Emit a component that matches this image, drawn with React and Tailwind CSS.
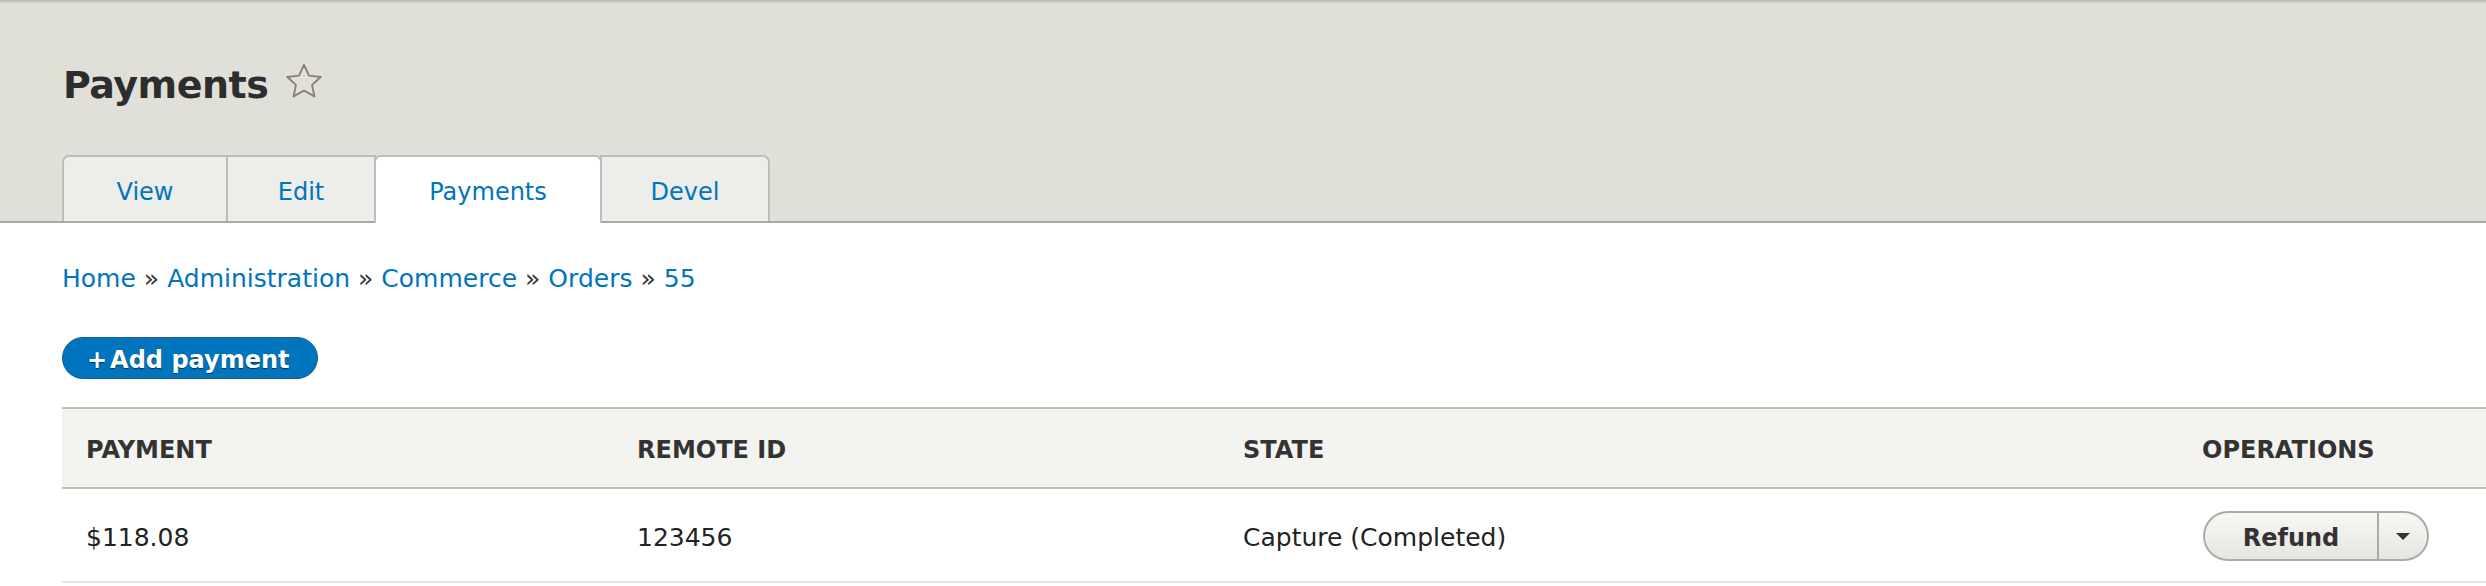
import React from "react";

const font = { fontFamily: '"DejaVu Sans", "Lucida Grande", Verdana, sans-serif' };

function Star() {
  return (
    <svg width="42" height="42" viewBox="0 0 24 24" className="mb-[6px] ml-[15px] shrink-0">
      <path
        d="M12 2.2l2.85 6.15 6.7.75-4.95 4.55 1.35 6.6L12 16.95l-5.95 3.3 1.35-6.6L2.45 9.1l6.7-.75z"
        fill="none"
        stroke="#87856f"
        strokeWidth="1.1"
        strokeLinejoin="round"
      />
    </svg>
  );
}

function Tab({ label, active, className }) {
  if (active) {
    return (
      <div
        className={
          "relative z-10 -ml-[2px] mb-[-2px] flex h-[68px] items-center justify-center border-2 border-b-0 border-[#bdbdb8] bg-white pt-[3px] text-[24px] text-[#0074bd] " +
          className
        }
      >
        {label}
      </div>
    );
  }
  return (
    <div
      className={
        "flex h-[66px] items-center justify-center border-2 border-b-0 border-[#bdbdb8] bg-[#edede9] pt-[5px] text-[24px] text-[#0074bd] " +
        className
      }
    >
      {label}
    </div>
  );
}

export default function App() {
  return (
    <div className="min-h-[586px] w-full bg-white text-[#333]" style={font}>
      {/* Header */}
      <div className="bg-[#e0e0d8]">
        <div className="h-[4px] bg-linear-to-b from-[#b9b9b1] to-[#e0e0d8]" />
        <div className="pl-[63px] pt-[62px]">
          <div className="flex h-[38px] items-center">
            <h1 className="text-[38px] font-bold leading-none tracking-[-0.5px] text-[#2d2d2d]">
              Payments
            </h1>
            <Star />
          </div>
        </div>
        <div className="mt-[51px] flex items-end border-b-2 border-[#a8a8a8] pl-[62px]">
          <Tab label="View" className="w-[166px] rounded-tl-[7px]" />
          <Tab label="Edit" className="-ml-[2px] w-[150px]" />
          <Tab label="Payments" active className="w-[228px] rounded-t-[7px]" />
          <Tab label="Devel" className="-ml-[2px] w-[170px] rounded-tr-[7px]" />
        </div>
      </div>

      {/* Content */}
      <div className="pl-[62px]">
        <nav className="mt-[38px] flex items-center gap-[8px] text-[25px] leading-[36px]">
          <span className="text-[#0074bd]">Home</span>
          <span className="text-[#333]">»</span>
          <span className="text-[#0074bd]">Administration</span>
          <span className="text-[#333]">»</span>
          <span className="text-[#0074bd]">Commerce</span>
          <span className="text-[#333]">»</span>
          <span className="text-[#0074bd]">Orders</span>
          <span className="text-[#333]">»</span>
          <span className="text-[#0074bd]">55</span>
        </nav>

        <div className="mt-[40px] flex">
          <button className="flex h-[42px] items-center rounded-full border border-[#1e5c90] bg-[#0074bd] pl-[24px] pr-[27px] pt-[3px] text-[24px] font-bold leading-none text-white [text-shadow:0_1px_1px_rgba(0,0,0,0.55)]">
            <span className="mr-[3px]">+</span>Add payment
          </button>
        </div>

        {/* Table */}
        <div className="mt-[28px]">
          <div className="grid h-[82px] grid-cols-[551px_606px_959px_1fr] items-center border-y-2 border-[#bfbfba] bg-[#f3f3ef] pt-[3px] text-[24px] font-bold text-[#333]">
            <div className="pl-[24px]">PAYMENT</div>
            <div className="pl-[24px]">REMOTE ID</div>
            <div className="pl-[24px]">STATE</div>
            <div className="pl-[24px]">OPERATIONS</div>
          </div>
          <div className="grid h-[94px] grid-cols-[551px_606px_959px_1fr] items-center border-b-2 border-[#e6e4df] text-[25px] text-[#222]">
            <div className="pl-[24px] pt-[5px]">$118.08</div>
            <div className="pl-[24px] pt-[5px]">123456</div>
            <div className="pl-[24px] pt-[5px]">Capture (Completed)</div>
            <div className="pl-[25px] pt-[2px]">
              <div className="flex h-[50px] w-[226px] items-stretch overflow-hidden rounded-full border-2 border-[#acaca7] bg-linear-to-b from-[#f7f7f4] to-[#e6e5e0]">
                <div className="flex w-[172px] items-center justify-center pt-[3px] text-[24px] font-bold text-[#333]">
                  Refund
                </div>
                <div className="flex flex-1 items-center justify-center border-l-2 border-[#acaca7]">
                  <svg width="16" height="9" viewBox="0 0 16 9">
                    <path d="M1 1h14L8 8z" fill="#333" />
                  </svg>
                </div>
              </div>
            </div>
          </div>
        </div>
      </div>
    </div>
  );
}
